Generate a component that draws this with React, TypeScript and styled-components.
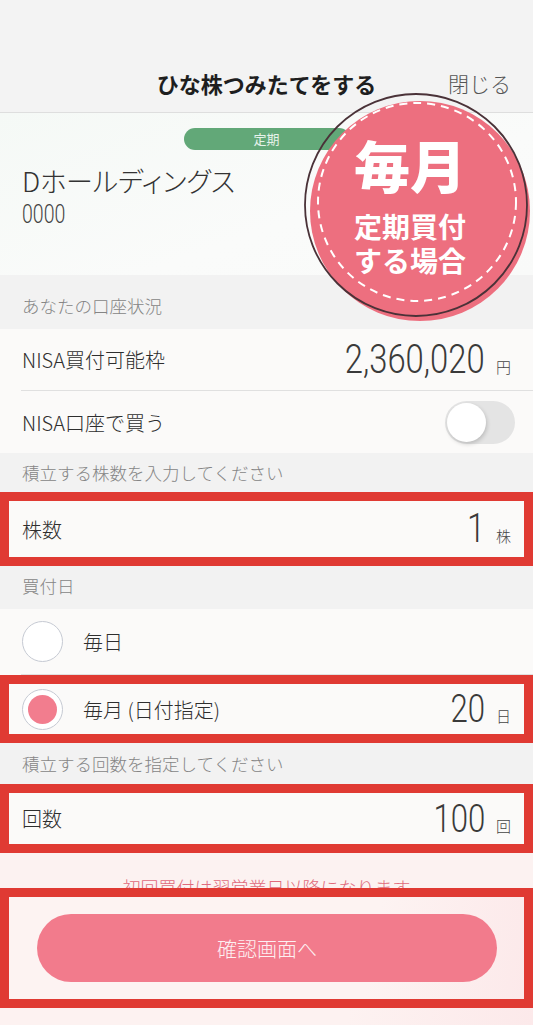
import React from "react";
import styled, { createGlobalStyle } from "styled-components";

const GlobalStyle = createGlobalStyle`
  html, body {
    margin: 0;
    padding: 0;
  }
  body {
    background: #f2f2f2;
    font-family: "Noto Sans CJK JP", "Noto Sans", sans-serif;
    color: #333;
  }
`;

const Page = styled.div`
  position: relative;
  width: 533px;
  height: 1025px;
  overflow: hidden;
  display: flex;
  flex-direction: column;
  background: #f2f2f2;
`;

const Header = styled.header`
  height: 113px;
  box-sizing: border-box;
  display: grid;
  grid-template-columns: 1fr auto 1fr;
  align-items: end;
  padding-bottom: 14px;
  border-bottom: 1px solid #dedede;
  background: #f3f3f3;
`;

const Title = styled.h1`
  grid-column: 2;
  margin: 0;
  font-size: 22px;
  font-weight: 700;
  line-height: 30px;
  color: #1e1e1e;
`;

const Close = styled.button`
  justify-self: end;
  padding: 0 22px 0 0;
  border: none;
  background: none;
  font-family: inherit;
  font-size: 21px;
  font-weight: 300;
  line-height: 30px;
  color: #555;
`;

const StockCard = styled.section`
  height: 162px;
  box-sizing: border-box;
  padding: 15px 22px 0;
  background: linear-gradient(160deg, #f5f9f6 0%, #fafbfa 60%, #f9faf9 100%);
`;

const Pill = styled.div`
  width: 166px;
  height: 22px;
  margin: 0 auto;
  border-radius: 11px;
  background: #62a878;
  color: #e6f2ea;
  font-size: 13px;
  line-height: 22px;
  text-align: center;
`;

const StockName = styled.div`
  margin-top: 14px;
  font-size: 27px;
  font-weight: 300;
  line-height: 34px;
  font-feature-settings: "palt";
  color: #333;
`;

const StockCode = styled.div`
  margin-top: 6px;
  font-family: Roboto, sans-serif;
  font-weight: 300;
  font-size: 25px;
  line-height: 22px;
  color: #444;
  display: inline-block;
  transform: scaleX(0.78);
  transform-origin: left;
`;

const SectionLabel = styled.div<{ $h: number; $pb: number }>`
  height: ${(p) => p.$h}px;
  box-sizing: border-box;
  display: flex;
  align-items: flex-end;
  padding: 0 22px ${(p) => p.$pb}px;
  font-size: 17.5px;
  font-weight: 300;
  line-height: 24px;
  color: #858585;
`;

const Row = styled.div<{ $h: number; $inset?: boolean }>`
  height: ${(p) => p.$h}px;
  box-sizing: border-box;
  display: flex;
  align-items: center;
  padding: 0 ${(p) => (p.$inset ? "13px" : "22px")};
  background: #fbfaf9;
`;

const Label = styled.span`
  font-size: 20px;
  font-weight: 300;
  color: #2e2e2e;
`;

const Divider = styled.div`
  height: 1px;
  background: #fbfaf9;
  &::after {
    content: "";
    display: block;
    height: 1px;
    margin-left: 21px;
    background: #e0e0e0;
  }
`;

const Value = styled.div`
  margin-left: auto;
  display: flex;
  align-items: baseline;
  gap: 11px;
`;

const Num = styled.span<{ $size: number }>`
  display: inline-block;
  font-family: Roboto, sans-serif;
  font-weight: 300;
  font-size: ${(p) => p.$size}px;
  line-height: 1;
  color: #3a3a3a;
  transform: scaleX(0.82);
  transform-origin: right;
`;

const Unit = styled.span`
  font-size: 15px;
  font-weight: 300;
  color: #444;
`;

const Toggle = styled.span`
  margin-left: auto;
  margin-right: -4px;
  width: 70px;
  height: 43px;
  box-sizing: border-box;
  padding: 2px;
  border-radius: 22px;
  background: #e4e4e4;
  display: flex;
  align-items: center;
`;

const Knob = styled.span`
  width: 39px;
  height: 39px;
  border-radius: 50%;
  background: #fff;
  box-shadow: 1px 2px 4px rgba(0, 0, 0, 0.18);
`;

const Radio = styled.span<{ $checked?: boolean }>`
  width: 41px;
  height: 41px;
  flex-shrink: 0;
  box-sizing: border-box;
  margin-right: 20px;
  border: 1.5px solid #c6cad3;
  border-radius: 50%;
  background: #fff;
  display: flex;
  align-items: center;
  justify-content: center;
  &::after {
    content: "";
    display: ${(p) => (p.$checked ? "block" : "none")};
    width: 29px;
    height: 29px;
    border-radius: 50%;
    background: #f27d8e;
  }
`;

const Highlight = styled.div`
  position: relative;
  border: 9px solid #e03a33;
`;

const Notice = styled.p`
  margin: 0;
  height: 35px;
  box-sizing: border-box;
  padding-top: 22px;
  text-align: center;
  font-size: 18px;
  font-weight: 300;
  line-height: 25px;
  color: #e06a7b;
  background: #fcf2f1;
`;

const ButtonArea = styled.div`
  height: 102px;
  box-sizing: border-box;
  padding: 17px 27px 17px 28px;
  background: linear-gradient(100deg, #fdf3f2 0%, #fdf3f2 70%, #fce9ea 100%);
`;

const ConfirmButton = styled.button`
  width: 100%;
  height: 68px;
  border: none;
  border-radius: 34px;
  background: #f27b8c;
  color: #fdf0f2;
  font-family: inherit;
  font-size: 20px;
  font-weight: 300;
`;

const Footer = styled.div`
  flex: 1;
  background: linear-gradient(100deg, #fdf2f1 0%, #fdf2f1 65%, #fce9ea 100%);
`;

const Badge = styled.div`
  position: absolute;
  left: 300px;
  top: 90px;
  width: 235px;
  height: 235px;
  pointer-events: none;
`;

const BadgeText = styled.div`
  position: absolute;
  left: 0;
  top: 44px;
  width: 220px;
  display: flex;
  flex-direction: column;
  align-items: center;
  color: #fff;
  font-weight: 900;
`;

const BadgeBig = styled.span`
  font-size: 56px;
  line-height: 60px;
`;

const BadgeSmall = styled.span`
  margin-top: 15px;
  font-size: 28px;
  font-weight: 700;
  line-height: 34px;
  text-align: center;
`;

function MonthlyBadge() {
  return (
    <Badge>
      <svg width="235" height="235" viewBox="0 0 235 235">
        <circle cx="120" cy="121" r="110" fill="#ed6f7f" />
        <circle cx="116" cy="115" r="111" fill="none" stroke="#4a3238" strokeWidth="1.8" />
        <circle
          cx="117"
          cy="112"
          r="99"
          fill="none"
          stroke="#fff"
          strokeWidth="2"
          strokeDasharray="8 6"
        />
      </svg>
      <BadgeText>
        <BadgeBig>毎月</BadgeBig>
        <BadgeSmall>
          定期買付
          <br />
          する場合
        </BadgeSmall>
      </BadgeText>
    </Badge>
  );
}

export default function App() {
  return (
    <Page>
      <GlobalStyle />
      <Header>
        <Title>ひな株つみたてをする</Title>
        <Close>閉じる</Close>
      </Header>

      <StockCard>
        <Pill>定期</Pill>
        <StockName>Dホールディングス</StockName>
        <StockCode>0000</StockCode>
      </StockCard>

      <SectionLabel $h={54} $pb={11}>あなたの口座状況</SectionLabel>
      <Row $h={61}>
        <Label>NISA買付可能枠</Label>
        <Value>
          <Num $size={40}>2,360,020</Num>
          <Unit>円</Unit>
        </Value>
      </Row>
      <Divider />
      <Row $h={62}>
        <Label>NISA口座で買う</Label>
        <Toggle>
          <Knob />
        </Toggle>
      </Row>

      <SectionLabel $h={39} $pb={7}>積立する株数を入力してください</SectionLabel>
      <Highlight>
        <Row $h={56} $inset>
          <Label>株数</Label>
          <Value>
            <Num $size={40}>1</Num>
            <Unit>株</Unit>
          </Value>
        </Row>
      </Highlight>

      <SectionLabel $h={43} $pb={11}>買付日</SectionLabel>
      <Row $h={65}>
        <Radio />
        <Label>毎日</Label>
      </Row>
      <Divider />
      <Highlight>
        <Row $h={50} $inset>
          <Radio $checked />
          <Label>毎月 (日付指定)</Label>
          <Value>
            <Num $size={38}>20</Num>
            <Unit>日</Unit>
          </Value>
        </Row>
      </Highlight>

      <SectionLabel $h={41} $pb={8}>積立する回数を指定してください</SectionLabel>
      <Highlight>
        <Row $h={51} $inset>
          <Label>回数</Label>
          <Value>
            <Num $size={38}>100</Num>
            <Unit>回</Unit>
          </Value>
        </Row>
      </Highlight>

      <Notice>初回買付は翌営業日以降になります</Notice>
      <Highlight>
        <ButtonArea>
          <ConfirmButton>確認画面へ</ConfirmButton>
        </ButtonArea>
      </Highlight>
      <Footer />

      <MonthlyBadge />
    </Page>
  );
}
